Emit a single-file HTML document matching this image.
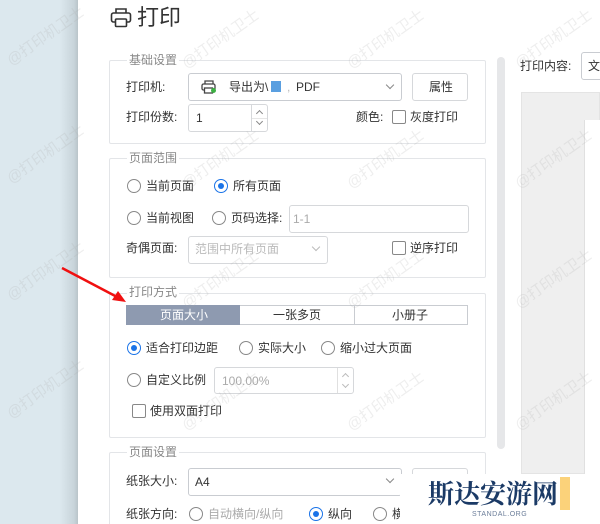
<!DOCTYPE html>
<html><head><meta charset="utf-8"><style>
*{margin:0;padding:0;box-sizing:border-box}
html{width:600px;height:524px;overflow:hidden}
body{width:600px;height:524px;overflow:hidden;position:relative;background:#fff;font-family:"Liberation Sans","Noto Sans CJK SC",sans-serif;font-size:12px;color:#333}
.a{position:absolute;white-space:nowrap}
.left{left:0;top:0;width:78px;height:524px;background:linear-gradient(90deg,#dce8ee 0,#dce8ee 60px,#c8d4da 74px,#b9c4c9 78px)}
.fs{position:absolute;border:1px solid #e3e5e8;border-radius:2px}
.lg{position:absolute;background:#fff;color:#888;font-size:12px;padding:0 2px;line-height:14px}
.box{position:absolute;border:1px solid #c9ccd1;border-radius:3px;background:#fff}
.rad{position:absolute;width:14px;height:14px;border:1px solid #888;border-radius:50%;background:#fff}
.rad.on{border-color:#1a73e8}
.rad.on::after{content:"";position:absolute;left:3px;top:3px;width:6px;height:6px;border-radius:50%;background:#1a73e8}
.chk{position:absolute;width:14px;height:14px;border:1px solid #888;border-radius:2px;background:#fff}
.t{position:absolute;white-space:nowrap;line-height:14px;font-size:12px;color:#333}
.g{color:#aaa}
.wm{position:absolute;color:rgba(170,170,170,.2);font-size:15px;transform:rotate(-35deg);white-space:nowrap}
.chev{position:absolute;width:6px;height:6px;border-right:1px solid #888;border-bottom:1px solid #888;transform:rotate(45deg)}
</style></head><body>
<div class="a left"></div>

<svg class="a" style="left:110px;top:7px" width="22" height="21" viewBox="0 0 22 21" fill="none" stroke="#333" stroke-width="1.6"><path d="M6 6V2h10v4"/><rect x="1.5" y="6" width="19" height="9" rx="2"/><rect x="5.5" y="12" width="11" height="7.5" rx="1" fill="#fff"/></svg>
<div class="t" style="left:137px;top:5px;font-size:22px;line-height:26px;color:#333">打印</div>

<div class="fs" style="left:109px;top:60px;width:377px;height:84px"></div>
<div class="lg" style="left:127px;top:53px">基础设置</div>
<div class="t" style="left:126px;top:80px">打印机:</div>
<div class="box" style="left:188px;top:73px;width:214px;height:28px"></div>
<svg class="a" style="left:201px;top:80px" width="16" height="14" viewBox="0 0 16 14" fill="none" stroke="#444" stroke-width="1.3"><path d="M4 4V1h8v3"/><rect x="1" y="4" width="13" height="6" rx="1.5"/><rect x="3.5" y="8" width="8" height="5" fill="#fff"/></svg>
<div class="a" style="left:211px;top:88px;width:5px;height:5px;border-radius:50%;background:#3cb043"></div>
<div class="t" style="left:229px;top:80px">导出为\</div>
<div class="a" style="left:271px;top:81px;width:10px;height:11px;background:#5a9fe0"></div>
<div class="t" style="left:287px;top:80px;color:#bbb">,</div>
<div class="t" style="left:296px;top:80px">PDF</div>
<div class="chev" style="left:387px;top:82px"></div>
<div class="box" style="left:412px;top:73px;width:56px;height:28px;border-color:#d6d8db"></div>
<div class="t" style="left:429px;top:80px">属性</div>
<div class="t" style="left:126px;top:110px">打印份数:</div>
<div class="box" style="left:188px;top:104px;width:80px;height:28px;border-color:#d6d8db"></div>
<div class="a" style="left:251px;top:105px;width:1px;height:26px;background:#d6d8db"></div>
<div class="a" style="left:252px;top:118px;width:15px;height:1px;background:#e6e6e6"></div>
<div class="chev" style="left:257px;top:111px;transform:rotate(-135deg);width:5px;height:5px"></div>
<div class="chev" style="left:257px;top:119px;width:5px;height:5px"></div>
<div class="t" style="left:196px;top:111px">1</div>
<div class="t" style="left:356px;top:110px">颜色:</div>
<div class="chk" style="left:392px;top:110px"></div>
<div class="t" style="left:410px;top:110px">灰度打印</div>

<div class="fs" style="left:109px;top:158px;width:377px;height:120px"></div>
<div class="lg" style="left:127px;top:151px">页面范围</div>
<div class="rad" style="left:127px;top:179px"></div><div class="t" style="left:146px;top:179px">当前页面</div>
<div class="rad on" style="left:214px;top:179px"></div><div class="t" style="left:233px;top:179px">所有页面</div>
<div class="rad" style="left:127px;top:211px"></div><div class="t" style="left:146px;top:211px">当前视图</div>
<div class="rad" style="left:212px;top:211px"></div><div class="t" style="left:231px;top:211px">页码选择:</div>
<div class="box" style="left:289px;top:205px;width:180px;height:28px;border-color:#d6d8db"></div>
<div class="t g" style="left:293px;top:212px">1-1</div>
<div class="t" style="left:126px;top:241px">奇偶页面:</div>
<div class="box" style="left:188px;top:236px;width:140px;height:28px;border-color:#d6d8db"></div>
<div class="t g" style="left:195px;top:242px;color:#bbb">范围中所有页面</div>
<div class="chev" style="left:313px;top:244px;border-color:#bbb"></div>
<div class="chk" style="left:392px;top:241px"></div>
<div class="t" style="left:410px;top:241px">逆序打印</div>

<div class="fs" style="left:109px;top:293px;width:377px;height:145px"></div>
<div class="lg" style="left:127px;top:285px">打印方式</div>
<div class="a" style="left:126px;top:305px;width:342px;height:20px;border:1px solid #c9ccd1"></div>
<div class="a" style="left:126px;top:305px;width:114px;height:20px;background:#8e9ab0"></div>
<div class="a" style="left:354px;top:305px;width:1px;height:20px;background:#c9ccd1"></div>
<div class="t" style="left:160px;top:308px;color:#fff">页面大小</div>
<div class="t" style="left:273px;top:308px">一张多页</div>
<div class="t" style="left:392px;top:308px">小册子</div>
<div class="rad on" style="left:127px;top:341px"></div><div class="t" style="left:146px;top:341px">适合打印边距</div>
<div class="rad" style="left:239px;top:341px"></div><div class="t" style="left:258px;top:341px">实际大小</div>
<div class="rad" style="left:321px;top:341px"></div><div class="t" style="left:340px;top:341px">缩小过大页面</div>
<div class="rad" style="left:127px;top:373px"></div><div class="t" style="left:146px;top:373px">自定义比例</div>
<div class="box" style="left:214px;top:367px;width:140px;height:27px;border-color:#d6d8db"></div>
<div class="a" style="left:337px;top:368px;width:1px;height:25px;background:#e0e0e0"></div>
<div class="chev" style="left:343px;top:374px;transform:rotate(-135deg);width:5px;height:5px;border-color:#bbb"></div>
<div class="chev" style="left:343px;top:382px;width:5px;height:5px;border-color:#bbb"></div>
<div class="t g" style="left:222px;top:374px">100.00%</div>
<div class="chk" style="left:132px;top:404px"></div>
<div class="t" style="left:150px;top:404px">使用双面打印</div>

<div class="fs" style="left:109px;top:452px;width:377px;height:90px"></div>
<div class="lg" style="left:127px;top:445px">页面设置</div>
<div class="t" style="left:126px;top:474px">纸张大小:</div>
<div class="box" style="left:188px;top:468px;width:214px;height:28px"></div>
<div class="t" style="left:195px;top:475px">A4</div>
<div class="chev" style="left:387px;top:476px"></div>
<div class="box" style="left:412px;top:468px;width:56px;height:28px;border-color:#d6d8db"></div>
<div class="t" style="left:126px;top:507px">纸张方向:</div>
<div class="rad" style="left:189px;top:507px"></div><div class="t g" style="left:208px;top:507px">自动横向/纵向</div>
<div class="rad on" style="left:309px;top:507px"></div><div class="t" style="left:328px;top:507px">纵向</div>
<div class="rad" style="left:373px;top:507px"></div><div class="t" style="left:392px;top:507px">横</div>

<div class="a" style="left:497px;top:57px;width:8px;height:392px;border-radius:4px;background:#e6e7e9"></div>

<div class="t" style="left:520px;top:59px">打印内容:</div>
<div class="box" style="left:581px;top:52px;width:30px;height:28px"></div>
<div class="t" style="left:588px;top:59px">文</div>
<div class="a" style="left:521px;top:92px;width:79px;height:382px;background:#efefef;border:1px solid #e4e4e4"></div>
<div class="a" style="left:584px;top:120px;width:16px;height:354px;background:#fff;border-left:1px solid #e0e0e0"></div>

<div class="wm" style="left:0px;top:25px">@打印机卫士</div>
<div class="wm" style="left:0px;top:143px">@打印机卫士</div>
<div class="wm" style="left:0px;top:260px">@打印机卫士</div>
<div class="wm" style="left:0px;top:378px">@打印机卫士</div>
<div class="wm" style="left:175px;top:28px">@打印机卫士</div>
<div class="wm" style="left:175px;top:148px">@打印机卫士</div>
<div class="wm" style="left:175px;top:268px">@打印机卫士</div>
<div class="wm" style="left:175px;top:390px">@打印机卫士</div>
<div class="wm" style="left:340px;top:28px">@打印机卫士</div>
<div class="wm" style="left:340px;top:148px">@打印机卫士</div>
<div class="wm" style="left:340px;top:268px">@打印机卫士</div>
<div class="wm" style="left:340px;top:390px">@打印机卫士</div>
<div class="wm" style="left:508px;top:28px">@打印机卫士</div>
<div class="wm" style="left:508px;top:148px">@打印机卫士</div>
<div class="wm" style="left:508px;top:268px">@打印机卫士</div>
<div class="wm" style="left:508px;top:390px">@打印机卫士</div>

<svg class="a" style="left:55px;top:262px" width="80" height="45" viewBox="0 0 80 45"><line x1="7" y1="6" x2="64" y2="36" stroke="#f01010" stroke-width="2.5"/><path d="M71 40L57 38L63 29Z" fill="#f01010"/></svg>

<div class="a" style="left:400px;top:474px;width:200px;height:50px;background:#fff"></div>
<div class="a" style="left:540px;top:477px;width:30px;height:33px;background:#fbd27a"></div>
<div class="a" style="left:540px;top:477px;width:20px;height:33px;background:#fff"></div>
<div class="t" style="left:428px;top:478px;font-family:'Noto Serif CJK SC',serif;font-weight:bold;font-size:26px;line-height:30px;color:#1b3a66">斯达安游网</div>
<div class="t" style="left:472px;top:511px;font-size:7px;line-height:8px;color:#6b7d99;letter-spacing:.5px">STANDAL.ORG</div>
</body></html>
